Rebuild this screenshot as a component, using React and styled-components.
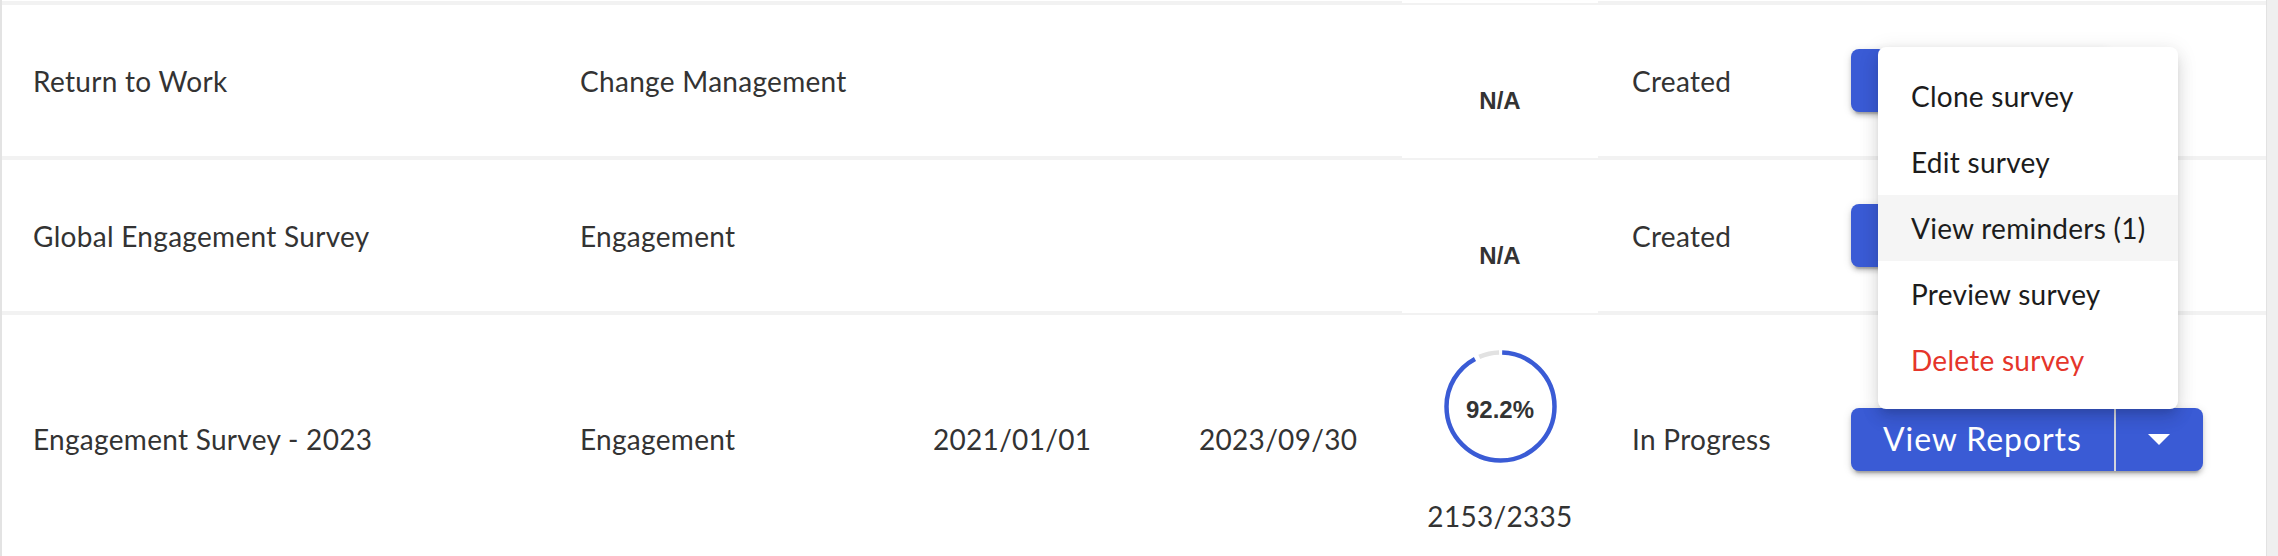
import styled, { createGlobalStyle } from 'styled-components';

const GlobalStyle = createGlobalStyle`
  html, body {
    margin: 0;
    padding: 0;
    background: #fff;
    overflow: hidden;
  }
  body {
    font-family: 'Lato', 'Noto Sans', sans-serif;
    color: #333;
  }
`;

const Page = styled.div`
  display: flex;
  height: 556px;
`;

const Table = styled.div`
  flex: 1;
  border-left: 2px solid #e3e3e3;
`;

const ScrollTrack = styled.div`
  width: 11px;
  background: #efefef;
  border-left: 1px solid #e2e2e2;
`;

const Row = styled.div`
  display: grid;
  grid-template-columns: 578px 353px 266px 203px 196px 253px 1fr;
  grid-template-rows: minmax(${(p) => p.$minHeight}px, auto);
  align-items: center;
  border-bottom: 4px solid #f2f2f2;
`;

const Cell = styled.div`
  padding-left: ${(p) => p.$indent || 0}px;
  font-size: 28px;
  line-height: 34px;
  letter-spacing: 0.01071em;
  color: #333;
  white-space: nowrap;
`;

// white column that bleeds 2px into the row separator below
const ProgressCell = styled.div`
  grid-column: 5;
  align-self: stretch;
  margin-bottom: -2px;
  padding: ${(p) => p.$pad};
  background: #fff;
  display: flex;
  flex-direction: column;
  align-items: center;
  justify-content: center;
`;

const NotAvailable = styled.span`
  font-family: 'Liberation Sans', Arial, sans-serif;
  font-weight: 700;
  font-size: 24px;
  line-height: 28px;
  color: #333;
`;

const Ring = styled.div`
  display: grid;
  place-items: center;
  width: 113px;
  height: 113px;

  & > * {
    grid-area: 1 / 1;
  }
`;

const RingLabel = styled.span`
  font-family: 'Liberation Sans', Arial, sans-serif;
  font-weight: 700;
  font-size: 24px;
  line-height: 28px;
  color: #333;
  padding-top: 6px;
`;

const Count = styled.span`
  margin-top: 36px;
  font-size: 28px;
  line-height: 34px;
  letter-spacing: 0.01071em;
  color: #333;
`;

const ActionCell = styled.div`
  display: flex;
`;

const ButtonGroup = styled.div`
  position: relative;
  display: inline-flex;
  height: 63px;
  border-radius: 8px;
  background: #3a5bd5;
  box-shadow: 0 6px 2px -4px rgba(0, 0, 0, 0.2), 0 4px 4px 0 rgba(0, 0, 0, 0.14),
    0 2px 10px 0 rgba(0, 0, 0, 0.12);
`;

const MainButton = styled.button`
  padding: 0 32px;
  border: none;
  border-right: 2px solid #d2d5de;
  background: transparent;
  color: #fff;
  font-family: 'Lato', sans-serif;
  font-size: 32px;
  line-height: 38px;
  letter-spacing: 0.02857em;
  cursor: pointer;
`;

const ArrowButton = styled.button`
  width: 87px;
  display: flex;
  align-items: center;
  justify-content: center;
  border: none;
  background: transparent;
  cursor: pointer;
`;

const Menu = styled.ul`
  position: absolute;
  left: 27px;
  bottom: calc(100% - 1px);
  z-index: 10;
  width: 300px;
  margin: 0;
  padding: 16px 0;
  list-style: none;
  background: #fff;
  border-radius: 8px;
  box-shadow: 0 6px 10px -4px rgba(0, 0, 0, 0.14), 0 10px 18px 1px rgba(0, 0, 0, 0.08),
    0 3px 20px 2px rgba(0, 0, 0, 0.08);
`;

const MenuItem = styled.li`
  padding: 12px 33px;
  font-size: 28px;
  line-height: 42px;
  letter-spacing: 0.00938em;
  color: ${(p) => (p.$danger ? '#e5352a' : '#1c1c1c')};
  background: ${(p) => (p.$active ? '#f5f5f5' : 'transparent')};
  white-space: nowrap;
`;

function DropArrow() {
  return (
    <svg width="22" height="11" viewBox="0 0 22 11" aria-hidden="true">
      <path d="M0 0h22L11 11z" fill="#fff" />
    </svg>
  );
}

function ProgressRing({ value }) {
  const r = 54;
  const c = 2 * Math.PI * r;
  const start = 0.005 * c;
  const blue = (value / 100 - 0.007) * c;
  const grayStart = (value / 100 + 0.012) * c;
  const gray = c - grayStart - 0.006 * c;

  return (
    <Ring>
      <svg width="113" height="113" viewBox="0 0 113 113">
        <g transform="rotate(-90 56.5 56.5)">
          <circle
            cx="56.5"
            cy="56.5"
            r={r}
            fill="none"
            stroke="#e2e2e2"
            strokeWidth="4.5"
            strokeDasharray={`${gray} ${c}`}
            strokeDashoffset={-grayStart}
          />
          <circle
            cx="56.5"
            cy="56.5"
            r={r}
            fill="none"
            stroke="#3a5bd5"
            strokeWidth="4.5"
            strokeDasharray={`${blue} ${c}`}
            strokeDashoffset={-start}
          />
        </g>
      </svg>
      <RingLabel>{value}%</RingLabel>
    </Ring>
  );
}

const surveys = [
  { name: 'Return to Work', type: 'Change Management', status: 'Created', action: 'Launch' },
  { name: 'Global Engagement Survey', type: 'Engagement', status: 'Created', action: 'Launch' },
  {
    name: 'Engagement Survey - 2023',
    type: 'Engagement',
    start: '2021/01/01',
    end: '2023/09/30',
    progress: 92.2,
    responses: '2153/2335',
    status: 'In Progress',
    action: 'View Reports',
    menuOpen: true,
  },
];

const menuItems = [
  { label: 'Clone survey' },
  { label: 'Edit survey' },
  { label: 'View reminders (1)', active: true },
  { label: 'Preview survey' },
  { label: 'Delete survey', danger: true },
];

export default function App() {
  return (
    <>
      <GlobalStyle />
      <Page>
        <Table>
          {/* bottom edge of the row scrolled out above */}
          <Row $minHeight={1}>
            <ProgressCell $pad="0" />
          </Row>

          {surveys.map((s) => (
            <Row key={s.name} $minHeight={151}>
              <Cell $indent={31}>{s.name}</Cell>
              <Cell>{s.type}</Cell>
              <Cell>{s.start}</Cell>
              <Cell>{s.end}</Cell>
              {s.progress ? (
                <ProgressCell $pad="35px 0 32px">
                  <ProgressRing value={s.progress} />
                  <Count>{s.responses}</Count>
                </ProgressCell>
              ) : (
                <ProgressCell $pad="38px 0 0">
                  <NotAvailable>N/A</NotAvailable>
                </ProgressCell>
              )}
              <Cell $indent={34}>{s.status}</Cell>
              <ActionCell>
                <ButtonGroup>
                  <MainButton>{s.action}</MainButton>
                  <ArrowButton aria-label="More actions">
                    <DropArrow />
                  </ArrowButton>
                  {s.menuOpen && (
                    <Menu>
                      {menuItems.map((m) => (
                        <MenuItem key={m.label} $active={m.active} $danger={m.danger}>
                          {m.label}
                        </MenuItem>
                      ))}
                    </Menu>
                  )}
                </ButtonGroup>
              </ActionCell>
            </Row>
          ))}
        </Table>
        <ScrollTrack />
      </Page>
    </>
  );
}
